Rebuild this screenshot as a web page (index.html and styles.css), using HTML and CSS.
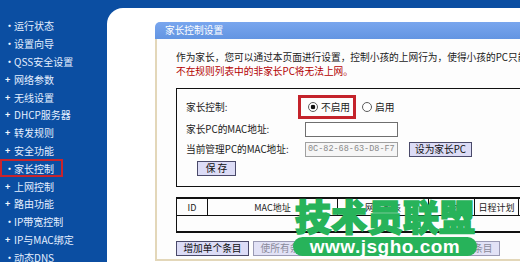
FILE: index.html
```html
<!DOCTYPE html>
<html lang="zh-CN">
<head>
<meta charset="utf-8">
<title>家长控制设置</title>
<link rel="stylesheet" href="styles.css">
</head>
<body>
<div class="app">
  <nav class="side">
    <ul class="menu">
      <li><span class="bullet">•</span>运行状态</li>
      <li><span class="bullet">•</span>设置向导</li>
      <li><span class="bullet">•</span>QSS安全设置</li>
      <li><span class="bullet">+</span>网络参数</li>
      <li><span class="bullet">+</span>无线设置</li>
      <li><span class="bullet">+</span>DHCP服务器</li>
      <li><span class="bullet">+</span>转发规则</li>
      <li><span class="bullet">+</span>安全功能</li>
      <li class="active"><span class="bullet">•</span>家长控制</li>
      <li><span class="bullet">+</span>上网控制</li>
      <li><span class="bullet">+</span>路由功能</li>
      <li><span class="bullet">•</span>IP带宽控制</li>
      <li><span class="bullet">+</span>IP与MAC绑定</li>
      <li><span class="bullet">•</span>动态DNS</li>
    </ul>
  </nav>
  <main class="content">
    <section class="panel">
      <h1 class="panel-title">家长控制设置</h1>
      <div class="panel-body">
        <p class="intro">作为家长，您可以通过本页面进行设置，控制小孩的上网行为，使得小孩的PC只能访问指定的网站。</p>
        <p class="warn">不在规则列表中的非家长PC将无法上网。</p>
        <div class="settings">
          <div class="fields">
            <span class="label">家长控制:</span>
            <div class="value">
              <span class="opt opt-on"><span class="radio checked"></span>不启用</span>
              <span class="opt"><span class="radio"></span>启用</span>
            </div>
            <span class="label">家长PC的MAC地址:</span>
            <div class="value"><input class="field" type="text" value=""></div>
            <span class="label">当前管理PC的MAC地址:</span>
            <div class="value"><input class="field off" type="text" value="0C-82-68-63-D8-F7" disabled><button class="btn btn-pc">设为家长PC</button></div>
          </div>
          <button class="btn btn-save">保 存</button>
        </div>
        <table class="rules">
          <colgroup>
            <col class="c-id"><col class="c-mac"><col class="c-list"><col class="c-desc"><col class="c-plan"><col class="c-state">
          </colgroup>
          <tr><th>ID</th><th>MAC地址</th><th>网站列表</th><th>描述</th><th>日程计划</th><th>状态</th></tr>
          <tr><td colspan="6"></td></tr>
        </table>
        <div class="actions">
          <button class="btn b-add">增加单个条目</button>
          <button class="btn b-off b-wide">使所有条目生效</button>
          <button class="btn b-off b-wide">使所有条目失效</button>
          <button class="btn b-off b-add">删除所有条目</button>
        </div>
      </div>
    </section>
    <div class="watermark">
      <div class="wm-title">技术员联盟</div>
      <div class="wm-pill">www.jsgho.com</div>
    </div>
  </main>
</div>
</body>
</html>
```
FILE: styles.css
```css
html, body {
  margin: 0;
  padding: 0;
}
body {
  width: 520px;
  height: 262px;
  overflow: hidden;
  background: #0b4ea2;
  font-family: "Noto Sans CJK SC", "Liberation Sans", sans-serif;
  font-size: 9.7px;
  color: #1a1a1a;
}
.app {
  display: flex;
  height: 262px;
}
.side {
  width: 107px;
  flex: none;
}
.menu {
  list-style: none;
  margin: 0;
  padding: 17px 0 0;
  color: #e4eeff;
  font-size: 10px;
}
.menu li {
  display: flex;
  align-items: center;
  height: 17.8px;
  padding-left: 5px;
  box-sizing: border-box;
  white-space: nowrap;
}
.bullet {
  width: 9px;
  font-size: 9px;
  font-weight: bold;
  color: #f4f8ff;
}
.menu li.active {
  width: 63px;
  outline: 2px solid #c8242c;
  outline-offset: -2px;
}
.content {
  flex: 1;
  margin-top: 8px;
  background: #ffffff;
  border-top-left-radius: 16px;
  position: relative;
  overflow: hidden;
}
.panel {
  margin: 14px 0 0 48px;
  width: 400px;
}
.panel-title {
  margin: 0;
  height: 17px;
  line-height: 17px;
  background: linear-gradient(#79a6ee, #6395e2);
  color: #ffffff;
  font-size: 9.7px;
  font-weight: normal;
  padding-left: 10px;
  border-top-left-radius: 5px;
}
.panel-body {
  border-left: 2px solid #e3d7b9;
  border-bottom: 2px solid #e3d7b9;
  padding: 11px 0 3px 19px;
  background: #fdfdfd;
}
.intro, .warn {
  margin: 0;
  line-height: 14px;
  white-space: nowrap;
}
.warn {
  color: #b30000;
}
.settings {
  margin-top: 10px;
  width: 372px;
  border: 1px solid #111;
  padding: 6px 0 10px 9px;
  box-sizing: border-box;
}
.fields {
  display: grid;
  grid-template-columns: 115px auto;
  grid-template-rows: 24px 20px 20px;
  align-items: center;
}
.label {
  white-space: nowrap;
}
.value {
  display: flex;
  align-items: center;
}
.opt {
  display: inline-flex;
  align-items: center;
  gap: 3px;
  height: 18px;
}
.opt-on {
  padding: 0 3px 0 7px;
  outline: 3px solid #c4232b;
}
.opt + .opt {
  margin-left: 9px;
}
.radio {
  width: 10px;
  height: 10px;
  border: 1px solid #5c5c5c;
  border-radius: 50%;
  box-sizing: border-box;
  background: #ffffff;
}
.radio.checked {
  background: radial-gradient(circle, #111 0 2px, #fff 2.6px);
}
.field {
  margin: 0 0 0 4px;
  width: 93px;
  height: 15px;
  box-sizing: border-box;
  border: 1px solid #6f6f6f;
  background: #ffffff;
  padding: 0 2px;
  font: 8.5px "Liberation Mono", monospace;
  color: #8a8a8a;
  outline: none;
}
.field.off {
  background: #f6f6f6;
  border-color: #a0a0a0;
}
.btn {
  height: 15px;
  box-sizing: border-box;
  border: 1px solid #4a4a6a;
  background: #dcdcf6;
  font: 9.7px "Noto Sans CJK SC", "Liberation Sans", sans-serif;
  color: #111;
  padding: 0;
  line-height: 13px;
  white-space: nowrap;
}
.btn-pc {
  margin-left: 11px;
  width: 63px;
}
.btn-save {
  display: block;
  margin: 2px 0 0 11px;
  width: 39px;
}
.rules {
  margin-top: 10px;
  width: 372px;
  border-collapse: collapse;
  table-layout: fixed;
  font-size: 9px;
  border-top: 2px solid #111;
  border-bottom: 2px solid #111;
}
.c-id { width: 31px; }
.c-mac { width: 130px; }
.c-list { width: 91px; }
.c-desc { width: 46px; }
.c-plan { width: 44px; }
.c-state { width: 30px; }
.rules th {
  font-weight: normal;
  border: 1px solid #111;
  height: 16px;
  padding: 0;
  white-space: nowrap;
  overflow: hidden;
}
.rules td {
  border: 1px solid #111;
  height: 15px;
  padding: 0;
}
.actions {
  display: flex;
  gap: 4px;
  margin-top: 8px;
}
.b-add { width: 73px; }
.b-wide { width: 83px; }
.b-off {
  color: #8a8a9a;
  border-color: #9a9ab4;
  background: #e2e2f6;
}
.watermark {
  position: absolute;
  left: 186px;
  top: 187px;
  width: 184px;
  display: flex;
  flex-direction: column;
  align-items: center;
}
.wm-title {
  font-family: "Noto Sans CJK SC", sans-serif;
  font-size: 36px;
  line-height: 40px;
  font-weight: 900;
  color: #27b35a;
  -webkit-text-stroke: 1.5px #27b35a;
  white-space: nowrap;
}
.wm-pill {
  margin-top: 2px;
  width: 184px;
  height: 19px;
  border-radius: 10px;
  background: #27b35a;
  color: #ffffff;
  font: bold 19px/19px "Liberation Sans", sans-serif;
  text-align: center;
  letter-spacing: 0.5px;
}
```
